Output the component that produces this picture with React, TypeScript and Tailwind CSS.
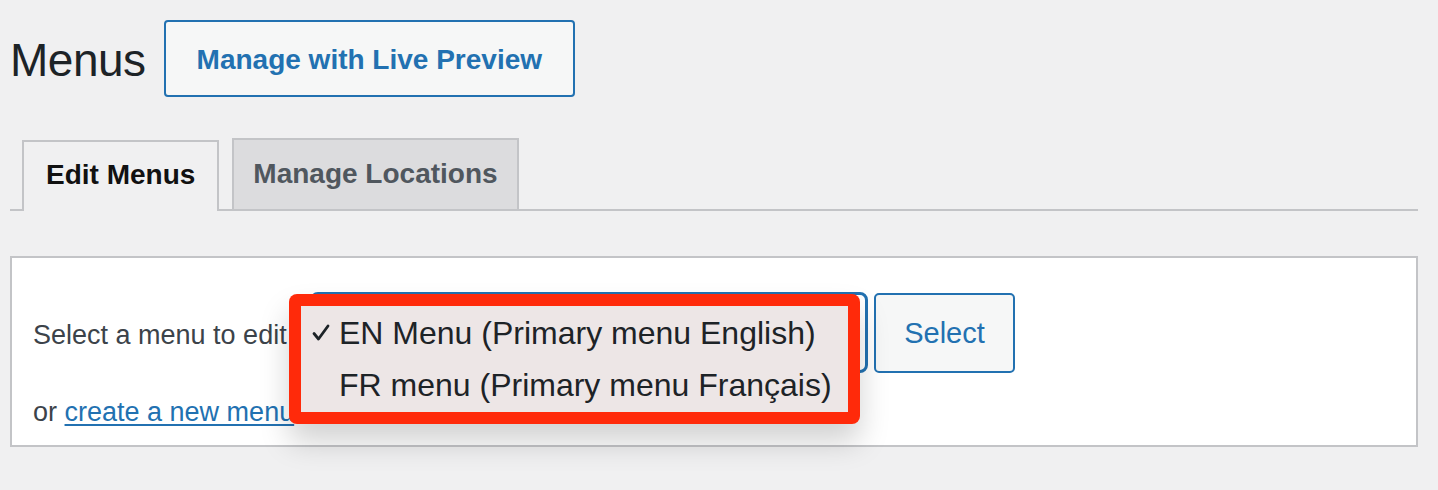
import React from "react";

const font = { fontFamily: '"Liberation Sans", Arial, sans-serif' };

export default function App() {
  return (
    <div
      className="min-h-[490px] w-full bg-[#f0f0f1] pl-[10px] pr-[20px] pt-[20px]"
      style={font}
    >
      <div className="flex items-center gap-[18px]">
        <h1 className="pt-[2px] text-[46px] leading-none font-normal text-[#1d2327] tracking-[-0.5px]">
          Menus
        </h1>
        <button className="h-[77px] pt-[3px] px-[31px] rounded-[4px] border-2 border-[#2271b1] bg-[#f6f7f7] text-[28px] font-bold text-[#2271b1]">
          Manage with Live Preview
        </button>
      </div>

      <div className="mt-[41px] flex items-end gap-[13px] border-b-2 border-[#c3c4c7] pl-[12px]">
        <div className="-mb-[2px] h-[71px] pb-[4px] px-[22px] flex items-center border-2 border-b-0 border-[#c3c4c7] bg-[#f0f0f1] text-[28px] font-bold text-[#111]">
          Edit Menus
        </div>
        <div className="h-[71px] pb-[2px] px-[19px] flex items-center border-2 border-b-0 border-[#c3c4c7] bg-[#dcdcde] text-[28px] font-bold text-[#50575e]">
          Manage Locations
        </div>
      </div>

      <div className="mt-[45px] h-[191px] border-2 border-[#c3c4c7] bg-white pl-[21px] pt-[34px]">
        <div className="flex items-center">
          <span className="pt-[5px] text-[27px] text-[#3c434a] w-[277px] whitespace-nowrap">Select a menu to edit</span>
          <div className="relative">
            <div className="h-[81px] w-[558px] rounded-[8px] border-[3px] border-[#2271b1] bg-white" />
            <div className="absolute left-[-21px] top-[2px] w-[571px] h-[130px] rounded-[8px] bg-[#ff2a0a] p-[12px] shadow-[0_18px_30px_rgba(0,0,0,0.18)] z-10">
              <div className="h-full w-full bg-[#ede6e6] flex flex-col justify-center pl-[10px] text-[32px] text-[#1d2327] whitespace-nowrap">
                <div className="flex items-center h-[52px]">
                  <span className="w-[28px] flex items-center">
                    <svg width="20" height="20" viewBox="0 0 20 20" fill="none">
                      <path d="M3 10.5 L7.5 16 L17 3" stroke="#1d2327" strokeWidth="2.8" strokeLinecap="round" strokeLinejoin="round" />
                    </svg>
                  </span>
                  <span>EN Menu (Primary menu English)</span>
                </div>
                <div className="flex items-center h-[52px]">
                  <span className="w-[28px]" />
                  <span>FR menu (Primary menu Français)</span>
                </div>
              </div>
            </div>
          </div>
          <button className="ml-[6px] h-[80px] pt-[3px] w-[141px] rounded-[5px] border-2 border-[#2271b1] bg-[#f6f7f7] text-[29px] text-[#2271b1]">
            Select
          </button>
        </div>
        <div className="mt-[19px] text-[27px] text-[#3c434a]">
          or{" "}
          <a href="#" className="text-[#2271b1] underline underline-offset-[3px]">
            create a new menu
          </a>
          .
        </div>
      </div>
    </div>
  );
}
